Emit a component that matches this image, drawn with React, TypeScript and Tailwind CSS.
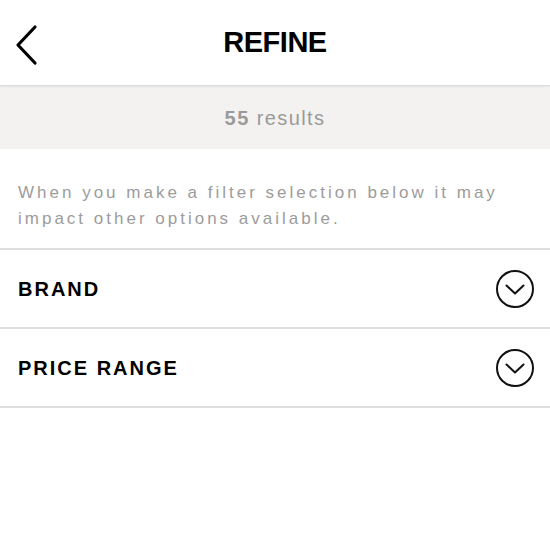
import { useState } from "react";

type FilterSection = {
  key: string;
  label: string;
};

const sections: FilterSection[] = [
  { key: "brand", label: "BRAND" },
  { key: "price", label: "PRICE RANGE" },
];

function BackChevron() {
  return (
    <svg width="26" height="42" viewBox="0 0 26 42" fill="none">
      <path d="M21 3 L4 21 L21 39" stroke="#000" strokeWidth="3.2" strokeLinecap="round" strokeLinejoin="round" />
    </svg>
  );
}

function CircleChevron({ open }: { open: boolean }) {
  return (
    <svg width="40" height="40" viewBox="0 0 40 40" fill="none" className={open ? "rotate-180" : ""}>
      <circle cx="20" cy="20" r="18" stroke="#111" strokeWidth="2" />
      <path d="M11.5 16.5 L20 24.5 L28.5 16.5" stroke="#111" strokeWidth="2" strokeLinecap="round" strokeLinejoin="round" />
    </svg>
  );
}

export default function App() {
  const [openKey, setOpenKey] = useState<string | null>(null);

  return (
    <div className="min-h-[550px] w-[550px] bg-white font-['Liberation_Sans',Arial,sans-serif]">
      <header className="relative flex h-[86px] items-center justify-center border-b border-[#dcdcdc] shadow-[0_1px_2px_rgba(0,0,0,0.06)]">
        <button className="absolute left-[14px] top-[24px]" type="button">
          <BackChevron />
        </button>
        <h1 className="text-[29px] font-bold tracking-[-0.5px] text-black">REFINE</h1>
      </header>

      <div className="flex h-[63px] items-center justify-center bg-[#f3f2f0] text-[20px] tracking-[1.4px] text-[#9a9a9a]">
        <span className="font-bold">55</span>
        <span className="ml-[7px] font-light">results</span>
      </div>

      <p className="border-b-2 border-[#dedede] px-[18px] pb-[16px] pt-[31px] text-[17px] leading-[26px] tracking-[3px] text-[#9c9c9c]">
        When you make a filter selection below it may impact other options available.
      </p>

      {sections.map((section) => (
        <button
          className="flex h-[79px] w-full items-center justify-between border-b-2 border-[#dedede] pl-[18px] pr-[15px]"
          key={section.key}
          onClick={() => setOpenKey(openKey === section.key ? null : section.key)}
          type="button"
        >
          <span className="text-[20px] font-bold tracking-[2px] text-black">{section.label}</span>
          <CircleChevron open={openKey === section.key} />
        </button>
      ))}
    </div>
  );
}
